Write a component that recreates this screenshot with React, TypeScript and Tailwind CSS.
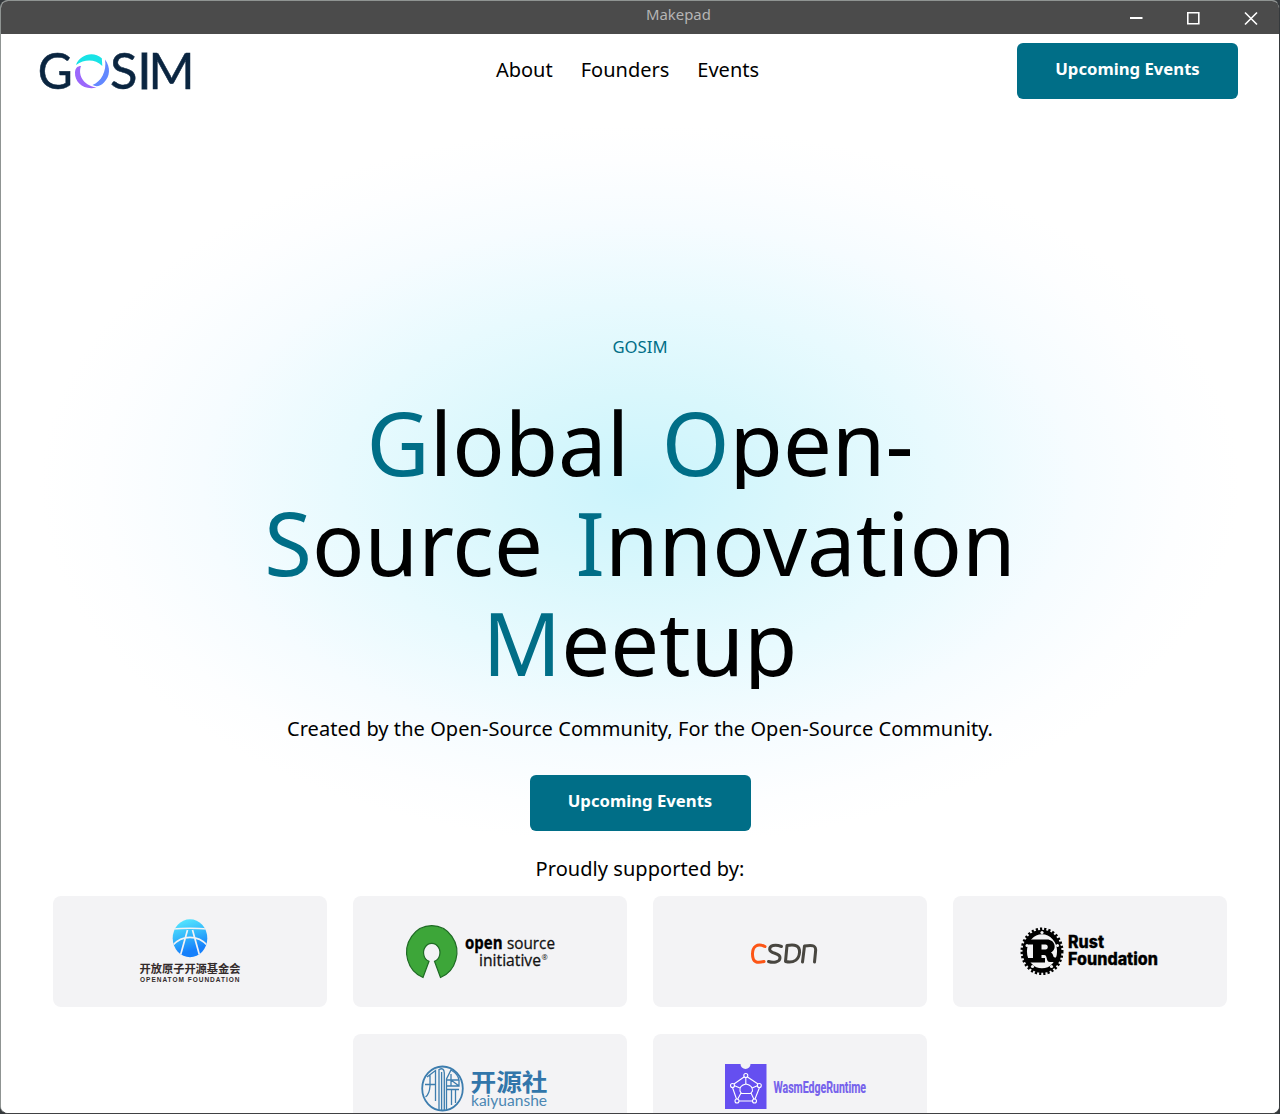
import type { ReactNode } from "react";

function GosimLogo() {
  return (
    <svg width="154" height="40" viewBox="0 0 154 40" className="block overflow-visible" fill="#0a2540">
      <g fontFamily="Lato" fontSize="49.500" stroke="#0a2540" strokeWidth="0.500">
        <text x="-1.200" y="38.300" textLength="35" lengthAdjust="spacingAndGlyphs">G</text>
        <text x="71" y="38.300" textLength="27.500" lengthAdjust="spacingAndGlyphs">S</text>
        <text x="98.600" y="38.300" strokeWidth="0.900">I</text>
        <text x="109.500" y="38.300" textLength="46" lengthAdjust="spacingAndGlyphs">M</text>
      </g>
      <path d="M37 14C40.500 4 54 -0.500 62.800 7.300L63.300 15C56 8 46 8 37 14Z" fill="#18e3e6" />
      <path d="M66 8.500C72 16.500 71 25.500 65 31.500C61 35.500 57 36 53.500 34C62 31 68 20 66 8.500Z" fill="#6288ff" />
      <path d="M42 15C39 23 43 34 57.500 36.500C45 39.500 35.500 31.500 36 21.500C36.300 17 38.500 15 42 15Z" fill="#9b67fb" />
    </svg>
  );
}

function EventsButton() {
  return (
    <button className="flex h-14 w-[221px] shrink-0 justify-center rounded-md bg-[#006e87] pt-[14px] text-[16.7px] leading-6 font-bold text-white">
      Upcoming Events
    </button>
  );
}

function Initial({ children }: { children: string }) {
  return <span className="text-[#006e87]">{children}</span>;
}

function HeadingLine({ children }: { children: ReactNode }) {
  return (
    <span className="flex h-[100px] justify-center gap-[32.6px] overflow-hidden leading-[106px]">{children}</span>
  );
}

function Card({ children }: { children: ReactNode }) {
  return <div className="h-[111px] w-[274px] overflow-hidden rounded-lg bg-[#f3f3f5]">{children}</div>;
}

function OpenAtom() {
  return (
    <svg width="274" height="111" viewBox="0 0 274 111">
      <defs>
        <linearGradient id="atom" x1="0.200" y1="0" x2="0.500" y2="1">
          <stop offset="0" stopColor="#58eaff" />
          <stop offset="0.450" stopColor="#34b8fb" />
          <stop offset="0.850" stopColor="#1680fb" />
        </linearGradient>
        <clipPath id="atomClip"><ellipse cx="137" cy="42.300" rx="17.300" ry="19" /></clipPath>
      </defs>
      <ellipse cx="137" cy="42.300" rx="17.300" ry="19" fill="url(#atom)" />
      <g clipPath="url(#atomClip)" stroke="#f3f3f5" fill="none" strokeWidth="1.700">
        <path d="M119 33Q137 31.500 155 33M134.500 34L127 61M139.500 34L147 61M119 50C129 38.500 145 38.500 155 50" />
      </g>
      <text x="86.500" y="76.800" fontFamily="'Noto Sans CJK SC', sans-serif" fontWeight="700" fontSize="11.500" textLength="101" lengthAdjust="spacingAndGlyphs" fill="#332b2b">开放原子开源基金会</text>
      <text x="87" y="86" fontFamily="'Liberation Sans', sans-serif" fontWeight="700" fontSize="6.500" textLength="99.500" fill="#332b2b">OPENATOM FOUNDATION</text>
    </svg>
  );
}

function OpenSource() {
  return (
    <svg width="274" height="111" viewBox="0 0 274 111">
      <path d="M70 81.500A25.100 26.800 0 1 1 87.500 81.500L81.500 65.300A8.200 9.200 0 1 0 76 65.300Z" fill="#3da639" stroke="#1f6b25" strokeWidth="1.200" />
      <g fontFamily="'Open Sans', sans-serif" fontSize="17" fill="#111">
        <text x="112" y="53" fontWeight="700" textLength="37.500" lengthAdjust="spacingAndGlyphs" fill="#000" stroke="#000" strokeWidth="0.300">open</text>
        <text x="154" y="53" textLength="48" lengthAdjust="spacingAndGlyphs" stroke="#111" strokeWidth="0.300">source</text>
        <text x="126" y="70" textLength="62" lengthAdjust="spacingAndGlyphs" stroke="#111" strokeWidth="0.300">initiative</text>
        <text x="188.500" y="63.500" fontSize="7.500">®</text>
      </g>
    </svg>
  );
}

function Csdn() {
  return (
    <svg width="274" height="111" viewBox="0 0 274 111" fill="none" strokeWidth="3" strokeLinecap="round" strokeLinejoin="round">
      <path d="M112 50.500C104 46.500 99.500 51 99.500 58C99.500 66.500 104 67.500 111 65.500" stroke="#fc5516" />
      <g stroke="#484640">
        <path d="M128.500 50.500C122 48 116.500 49.500 116.700 53.300C117 58.500 127.500 56 127 62C126.700 66.500 120 67 115.500 65.500" />
        <path d="M134 49.500L132.500 65.500C141 67.500 146 63.500 146.500 56.500C147 49.500 142 48 134 49.500Z" />
        <path d="M149.500 66L151.500 50C160 48.500 163.500 49.500 162.500 56L161.500 66" />
      </g>
    </svg>
  );
}

function Rust() {
  return (
    <svg width="274" height="111" viewBox="0 0 274 111">
      <ellipse cx="89" cy="55.300" rx="20" ry="22.300" fill="none" stroke="#000" strokeWidth="3" strokeDasharray="2.200 2.020" />
      <ellipse cx="89" cy="55.300" rx="17.300" ry="19.300" fill="none" stroke="#000" strokeWidth="4.500" />
      <g fill="#f3f3f5">
        <circle cx="89" cy="36.500" r="1.600" />
        <circle cx="74" cy="49.500" r="1.500" />
        <circle cx="104.500" cy="49.500" r="1.500" />
        <circle cx="79.500" cy="70.500" r="1.600" />
        <circle cx="98.500" cy="70.500" r="1.600" />
      </g>
      <path fillRule="evenodd" d="M75 43.500H94C102 43.500 104.500 53 98 56.500C101 58 99.500 61.500 102 61.500H105V66H97C92.500 66 95 59 91 59H88.500V62H92V66.500H75V62H80V48.500H75ZM88.500 48.500V53.500H92.500C95.500 53.500 95.500 48.500 92.500 48.500Z" fill="#000" />
      <g fontFamily="Inter, sans-serif" fontWeight="800" fontSize="16.800" fill="#000" stroke="#000" strokeWidth="0.300">
        <text x="115" y="52.300" textLength="36" lengthAdjust="spacingAndGlyphs">Rust</text>
        <text x="115" y="69" textLength="90" lengthAdjust="spacingAndGlyphs">Foundation</text>
      </g>
    </svg>
  );
}

function Kaiyuanshe() {
  return (
    <svg width="274" height="111" viewBox="0 0 274 111">
      <g fill="none" stroke="#3d7dae" strokeWidth="1.300">
        <ellipse cx="89.500" cy="54.500" rx="20.300" ry="22" strokeWidth="1.800" />
        <path d="M72 50.500H83M74 43L82.500 36.500V67M77 41V52Q76.500 60 72.500 63M86 76V35.500Q91 33 91.300 39V76M88.600 38V76M93.500 76V45L98 36Q105 40 106 46H94M94 52H106V46M98 40V52M98 46L106 52M98.500 56V71M102.500 56V69M94 55.500H106" />
      </g>
      <text x="117.500" y="57" fontFamily="'Noto Sans CJK SC', sans-serif" fontWeight="700" fontSize="24" textLength="77" lengthAdjust="spacingAndGlyphs" fill="#3276aa">开源社</text>
      <text x="118" y="72.300" fontFamily="Lato, sans-serif" fontSize="15.500" textLength="76" lengthAdjust="spacingAndGlyphs" fill="#4b87b3">kaiyuanshe</text>
    </svg>
  );
}

function WasmEdge() {
  return (
    <svg width="274" height="111" viewBox="0 0 274 111">
      <path d="M72 30H87.500A5 5 0 0 0 97.500 30H113.500V75H72Z" fill="#654ff0" />
      <g fill="none" stroke="#fff" strokeWidth="1.100">
        <path d="M91 43L81 50M94.500 43L105 50M79.500 53.500L83.500 65M106.500 53.500L102 65M86 67H100M92.800 43.500V50M81 51.500L87 54M105 51.500L99 54M84.500 65.500L88 59M101 65.500L98 59" />
        <path d="M87 57Q86 51.500 93 50Q100 51.500 99.500 57L97.500 59.500H88.500Z" />
        <circle cx="92.800" cy="41.500" r="2" />
        <circle cx="79.500" cy="51.500" r="2" />
        <circle cx="106.300" cy="51.500" r="2" />
        <circle cx="84" cy="67" r="2" />
        <circle cx="101.500" cy="67" r="2" />
      </g>
      <text x="120.500" y="58.700" fontFamily="Roboto, sans-serif" fontWeight="700" fontSize="17" textLength="92.500" lengthAdjust="spacingAndGlyphs" fill="#7561ec" stroke="#7561ec" strokeWidth="0.200">WasmEdgeRuntime</text>
    </svg>
  );
}

export default function App() {
  return (
    <div className="h-[1114px] w-[1280px] overflow-hidden bg-[#35393c] font-['Noto_Sans',sans-serif] text-black">
      <div className="flex h-full flex-col overflow-hidden rounded-lg border border-t-[#8f9492] border-r-[#35393c] border-b-[#404143] border-l-[#8f9492] bg-white">
        <div className="relative flex h-[33px] shrink-0 items-start justify-end bg-[#4b4b4b]">
          <span className="absolute left-[645px] top-[2px] text-[14.9px] leading-[22px] text-[#b5b5b5]">Makepad</span>
          <svg width="158" height="33" viewBox="0 0 158 33" fill="none" stroke="#fff">
            <path d="M9 17H21.500" strokeWidth="2" />
            <path d="M66.800 11.800H77.800V22.800H66.800ZM124 11.500L136 23.500M136 11.500L124 23.500" strokeWidth="1.600" />
          </svg>
        </div>
        <main className="flex min-h-0 flex-1 flex-col items-center bg-[radial-gradient(ellipse_600px_360px_at_639px_451px,#cbf4fc_0%,#d9f7fc_25%,#e8fafe_50%,#f6fcff_73%,#fdfeff_90%,#fff_100%)]">
          <header className="flex h-[75px] w-full shrink-0 justify-between pr-[41px] pl-[38px] pt-[9px]">
            <div className="w-[221px] pt-2"><GosimLogo /></div>
            <nav className="mr-[22px] flex gap-7 pt-3 text-[20px] leading-[30px]">
              <a>About</a><a>Founders</a><a>Events</a>
            </nav>
            <EventsButton />
          </header>
          <p className="mt-[225px] h-[25px] shrink-0 text-[16.7px] leading-[25px] text-[#006e87]">GOSIM</p>
          <h1 className="mt-[30px] h-[300px] shrink-0 text-[86.8px] font-normal">
            <HeadingLine>
              <span><Initial>G</Initial>lobal</span><span><Initial>O</Initial>pen-</span>
            </HeadingLine>
            <HeadingLine>
              <span><Initial>S</Initial>ource</span><span><Initial>I</Initial>nnovation</span>
            </HeadingLine>
            <HeadingLine><span><Initial>M</Initial>eetup</span></HeadingLine>
          </h1>
          <p className="mt-[25px] mb-[31px] shrink-0 text-[20px] leading-[30px] tracking-[0.055px]">Created by the Open-Source Community, For the Open-Source Community.</p>
          <EventsButton />
          <p className="mt-[23px] shrink-0 text-[20px] leading-[30px] tracking-[0.055px]">Proudly supported by:</p>
          <section className="mt-[12px] flex w-[1174px] shrink-0 flex-wrap justify-center gap-x-[26px] gap-y-[27px]">
            <Card><OpenAtom /></Card>
            <Card><OpenSource /></Card>
            <Card><Csdn /></Card>
            <Card><Rust /></Card>
            <Card><Kaiyuanshe /></Card>
            <Card><WasmEdge /></Card>
          </section>
        </main>
      </div>
    </div>
  );
}
